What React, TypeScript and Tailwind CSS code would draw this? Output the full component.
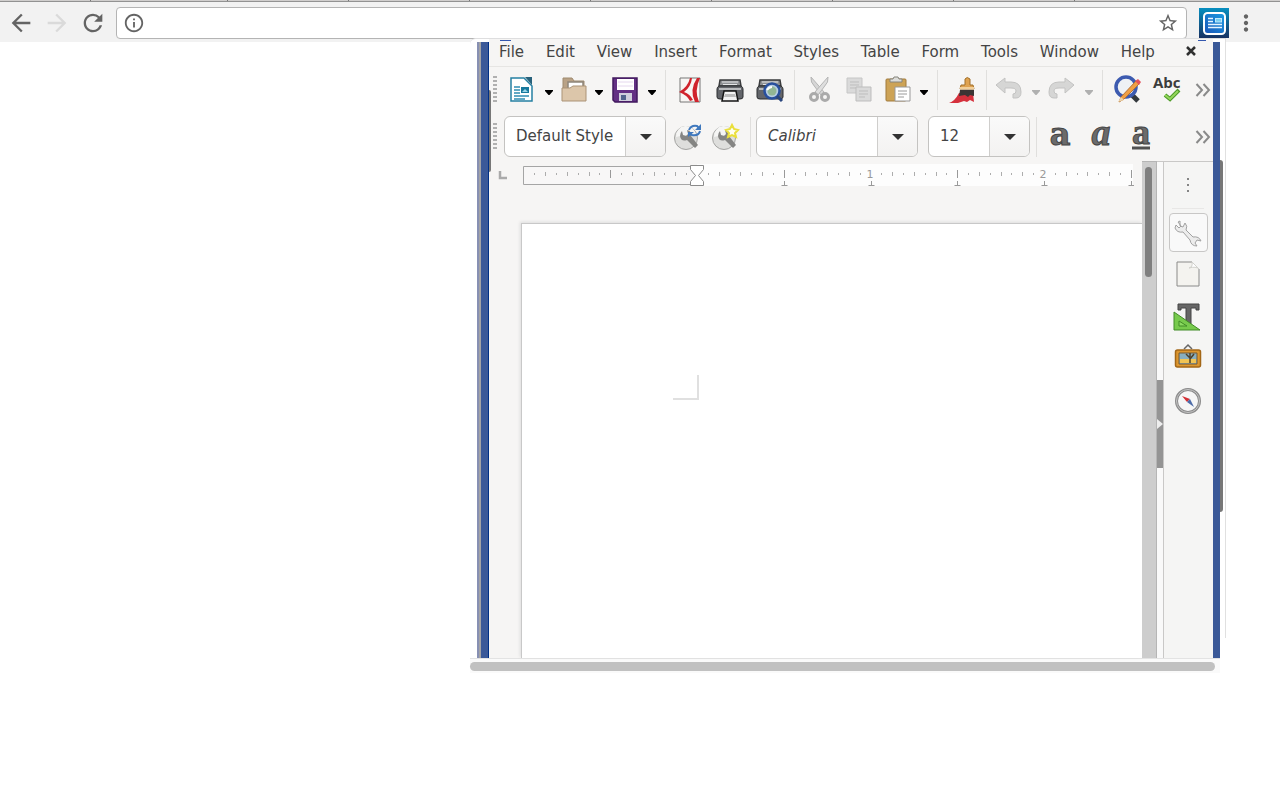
import type { ReactNode } from "react";
import {
  MdArrowBack,
  MdArrowForward,
  MdInfoOutline,
  MdMoreVert,
  MdRefresh,
  MdStarBorder,
} from "react-icons/md";

const menus = [
  "File",
  "Edit",
  "View",
  "Insert",
  "Format",
  "Styles",
  "Table",
  "Form",
  "Tools",
  "Window",
  "Help",
];

const Icon = ({ children }: { children: ReactNode }) => (
  <svg
    viewBox="0 0 28 28"
    className="h-7 w-7 shrink-0 overflow-visible"
    fill="none"
    aria-hidden="true"
  >
    {children}
  </svg>
);

const Tool = ({
  label,
  className = "",
  children,
}: {
  label: string;
  className?: string;
  children: ReactNode;
}) => (
  <button
    type="button"
    aria-label={label}
    className={`h-7 w-7 shrink-0 ${className}`}
  >
    <Icon>{children}</Icon>
  </button>
);

const Caret = ({
  label,
  muted,
  className = "",
}: {
  label: string;
  muted?: boolean;
  className?: string;
}) => (
  <button
    type="button"
    aria-label={label}
    className={`flex h-7 w-3.5 shrink-0 items-center justify-center ${className}`}
  >
    <svg viewBox="0 0 8 5" className="mt-1 h-[5px] w-2" aria-hidden="true">
      <path d="M0 0h8v1L4.500 5h-1L0 1z" fill={muted ? "#b0b0b0" : "#000"} />
    </svg>
  </button>
);

const Separator = ({ className = "" }: { className?: string }) => (
  <div className={`h-10 w-px shrink-0 bg-[#e0dfdd] ${className}`} />
);

const Handle = () => (
  <div className="flex w-3 shrink-0 justify-center">
    <div className="h-7 w-1 bg-[repeating-linear-gradient(#b0b0b0_0_2px,transparent_2px_4px)]" />
  </div>
);

const More = () => (
  <button type="button" aria-label="More" className="mr-0.5 ml-auto shrink-0">
    <svg
      viewBox="0 0 16 14"
      className="h-3.5 w-4"
      fill="none"
      stroke="#8a8a8a"
      strokeWidth="2"
      aria-hidden="true"
    >
      <path d="M1.500 1l5.500 6-5.500 6M8.500 1l5.500 6-5.500 6" />
    </svg>
  </button>
);

const Combo = ({
  label,
  value,
  className,
  inputClass = "",
}: {
  label: string;
  value: string;
  className: string;
  inputClass?: string;
}) => (
  <div
    className={`flex h-[41px] shrink-0 overflow-hidden rounded-md border border-[#c4c3c1] bg-white ${className}`}
  >
    <input
      aria-label={label}
      defaultValue={value}
      className={`mr-3 mb-px ml-[11px] min-w-0 flex-1 bg-transparent text-[15px] text-[#444] outline-none ${inputClass}`}
    />
    <button
      type="button"
      aria-label={`Open ${label}`}
      className="flex w-10 items-center justify-center border-l border-[#cfcecc] bg-linear-to-b from-[#fafafa] to-[#f3f2f1]"
    >
      <svg viewBox="0 0 12 6" className="h-1.5 w-3" aria-hidden="true">
        <path d="M0 0h12L6 6z" fill="#333" />
      </svg>
    </button>
  </div>
);

const Printer = () => (
  <>
    <path d="M4 4h20l1 6H3z" fill="#8f9194" stroke="#3a3b3d" strokeWidth="1.500" />
    <path d="M6 6h16M7 8.500h14" stroke="#e4e5e6" />
    <path
      d="M3 10h22q2 1 2 3v8q0 2-3 2H4q-3 0-3-2v-8q0-2 2-3z"
      fill="#63656a"
      stroke="#2d2e30"
    />
    <path d="M3 13h22" stroke="#b9bbbd" strokeWidth="2" />
  </>
);

const StyleBase = () => (
  <>
    <circle cx="12" cy="15" r="11.500" fill="#dededc" stroke="#a4a4a2" />
    <path d="M2 14a10 10 0 0 1 20-2Q12 11 2 14z" fill="#f5f5f4" />
    <path
      d="M8 8l1 4 3 1 2-2-1-4q5 1 4 6l7 9-3 3-8-8q-6 2-7-4 0-3 2-5z"
      fill="#858583"
    />
  </>
);

const BrowserBar = () => (
  <header className="bg-[#f2f2f2]">
    <div className="flex h-[2px] border-b border-[#929292] bg-[#d0cecd]">
      <div className="w-[91px] border-r border-[#777]" />
      <div className="w-[137px] border-r border-[#777]" />
      {[0, 1, 2, 3, 4, 5, 6].map((tab) => (
        <div key={tab} className="w-[121px] border-r border-[#777]" />
      ))}
    </div>
    <div className="flex h-10 items-center gap-2 pt-px pr-[21px] pl-[7px] text-[#646464]">
      <button type="button" aria-label="Back">
        <MdArrowBack size={28} />
      </button>
      <button type="button" aria-label="Forward" className="text-[#dadada]">
        <MdArrowForward size={28} />
      </button>
      <button type="button" aria-label="Reload">
        <MdRefresh size={28} />
      </button>
      <div className="ml-px flex h-8 flex-1 items-center rounded border border-[#b4b4b4] bg-white px-1.5">
        <MdInfoOutline size={22} />
        <input
          aria-label="Address"
          className="mx-2 min-w-0 flex-1 bg-transparent text-sm outline-none"
        />
        <button type="button" aria-label="Bookmark" className="mr-px">
          <MdStarBorder size={22} />
        </button>
      </div>
      <button type="button" aria-label="Writer extension" className="ml-1">
        <svg viewBox="0 0 30 30" className="h-[30px] w-[30px]" aria-hidden="true">
          <defs>
            <linearGradient id="extBack" x1="0" y1="0" x2="0" y2="1">
              <stop offset="0" stopColor="#078fc0" />
              <stop offset="1" stopColor="#173263" />
            </linearGradient>
            <linearGradient id="extFront" x1="0" y1="1" x2="1" y2="0">
              <stop offset="0" stopColor="#1b55b8" />
              <stop offset="1" stopColor="#199ce2" />
            </linearGradient>
          </defs>
          <path d="M0 0h30v30H0z" fill="url(#extBack)" />
          <rect x="5" y="5" width="21" height="21" rx="3.500" fill="url(#extFront)" stroke="#fff" strokeWidth="2" />
          <path d="M9 10.500h5M9 13.500h5M9 16.500h14M9 19.500h14" stroke="#e6f4ff" strokeWidth="1.500" />
          <rect x="16.500" y="10.500" width="6" height="3.500" fill="#7ad0f2" stroke="#bfe9fb" />
        </svg>
      </button>
      <button type="button" aria-label="Browser menu" className="-ml-1">
        <MdMoreVert size={26} />
      </button>
    </div>
  </header>
);

const MenuBar = () => (
  <nav className="flex h-7 shrink-0 items-center border-b border-[#e6e5e3] pr-4 pl-2.5">
    <div className="mb-0.5 flex flex-1 justify-between text-[15px] leading-5 text-[#444]">
      {menus.map((menu) => (
        <button key={menu} type="button">
          {menu}
        </button>
      ))}
    </div>
    <button type="button" aria-label="Close document" className="mb-1 ml-[30px]">
      <svg viewBox="0 0 12 12" className="h-3 w-3" aria-hidden="true">
        <path d="M2 2l8 8M10 2l-8 8" stroke="#303030" strokeWidth="2.500" />
      </svg>
    </button>
  </nav>
);

const StandardToolbar = () => (
  <div className="flex h-[46px] shrink-0 items-center">
    <Handle />
    <Tool label="New" className="ml-1.5">
      <path d="M4 2h13l8 8v15H4z" fill="#fff" stroke="#2680a2" strokeWidth="1.500" />
      <path d="M18 1h7v8z" fill="#28617b" />
      <path d="M7 11h6M7 14h6M7 17h6M7 20h15M7 23h11" stroke="#2f8db2" strokeWidth="1.500" />
      <path d="M14 11h8v6h-8z" fill="#17799d" />
      <path d="M15 16l3-3 3 3" fill="#9cd5e8" />
    </Tool>
    <Caret label="New options" className="ml-[7px]" />
    <Tool label="Open" className="ml-1">
      <path d="M3 21V2h9l2 3h10v16z" fill="#b9a286" stroke="#a08a6e" />
      <path d="M8 6h15v9H8z" fill="#fff" stroke="#8f867b" strokeWidth="1.500" />
      <path d="M2 12h8l3-2h13v15H2z" fill="#dcc6aa" stroke="#ab9377" />
    </Tool>
    <Caret label="Open options" className="ml-1" />
    <Tool label="Save" className="ml-[5px]">
      <path d="M2 2h24v24H4l-2-2z" fill="#633084" stroke="#42195e" strokeWidth="1.500" />
      <path d="M6 3h17v11H6z" fill="#fff" />
      <path d="M7 6h15M7 10h15" stroke="#e5d8ee" />
      <path d="M8 17h13v8H8z" fill="#d0d0dc" />
      <path d="M10 19h5v5h-5z" fill="#52648c" />
    </Tool>
    <Caret label="Save options" className="ml-1.5" />
    <Separator className="ml-1.5" />
    <Tool label="Export as PDF" className="ml-2.5">
      <path d="M4 2h20v24H4z" fill="#f8f6f4" stroke="#777" />
      <path d="M14 2Q12 11 3 16q8 3 11 9l3-1q-3-6-9-8 7-5 8-14z" fill="#d0232c" />
      <path d="M21 2q-8 12-2 24h4q-5-11 1-24z" fill="#d0232c" />
    </Tool>
    <Tool label="Print" className="ml-3">
      <Printer />
      <path d="M8 15h12l2 10H6z" fill="#f2f2f2" stroke="#151515" strokeWidth="1.500" />
      <path d="M9 18h10l1 3H8z" fill="#bcbcbc" />
    </Tool>
    <Tool label="Print preview" className="ml-3">
      <Printer />
      <circle cx="16" cy="15" r="7.500" fill="#b5cce0" stroke="#284f9d" strokeWidth="2.500" />
      <circle cx="16" cy="15" r="4.500" fill="#91b594" />
      <path d="M11 14q2-3 5-3" stroke="#fff" strokeWidth="2" />
      <path d="M21 20l5 5" stroke="#29457d" strokeWidth="3" />
    </Tool>
    <Separator className="ml-2.5" />
    <Tool label="Cut" className="ml-2.5">
      <path d="M6 1q-1 5 4 10l6 8 3-3-6-7z" fill="#d6d6d6" stroke="#b5b5b5" />
      <path d="M23 1q1 5-4 10l-6 8-3-3 6-7z" fill="#dedede" stroke="#b5b5b5" />
      <circle cx="9" cy="21" r="3.500" stroke="#aaa" strokeWidth="3" />
      <circle cx="20" cy="21" r="3.500" stroke="#aaa" strokeWidth="3" />
    </Tool>
    <Tool label="Copy" className="ml-3">
      <path d="M2 2h15v15H2z" fill="#dadada" stroke="#c6c6c6" />
      <path d="M5 6h9M5 9h9M5 12h6" stroke="#bdbdbd" />
      <path d="M11 11h15v14H11z" fill="#dadada" stroke="#bdbdbd" />
      <path d="M14 15h9M14 18h9M14 21h6" stroke="#bdbdbd" />
    </Tool>
    <Tool label="Paste" className="ml-3">
      <rect x="1" y="3" width="20" height="22" rx="1" fill="#cda356" stroke="#a17b3c" />
      <path d="M5 6V3h3l1-2h4l1 2h3v3z" fill="#dcdcd9" stroke="#85847d" />
      <path d="M10 11h15v14H10z" fill="#fff" stroke="#999" />
      <path d="M13 15h9M13 18h9M13 21h6" stroke="#9a9a9a" />
    </Tool>
    <Caret label="Paste options" className="ml-1" />
    <Separator className="ml-1.5" />
    <Tool label="Clone formatting" className="ml-2.5">
      <path d="M11 17h14l1 9-4-2-3 2-3-1-6 2H1q6-2 10-10z" fill="#d5303c" />
      <path d="M17 9V3q2-3 5 0v6h3l1 4H12l1-4z" fill="#dfa250" stroke="#a06f2a" />
      <path d="M12 12h14" stroke="#f1cf9a" strokeWidth="2" />
      <path d="M12 14h14v6l-4-1-2 2-3-2-6 1z" fill="#3c3434" />
    </Tool>
    <Separator className="ml-2.5" />
    <Tool label="Undo" className="ml-2">
      <path d="M10 2v4h6q10 0 10 10 0 6-5 6h-3v-4q3 0 3-3t-5-3h-6v5L1 9z" fill="#d6d6d5" stroke="#c3c3c2" />
    </Tool>
    <Caret label="Undo history" muted className="ml-1.5" />
    <Tool label="Redo" className="ml-1">
      <path d="M18 2v4h-6Q2 6 2 16q0 6 5 6h3v-4q-3 0-3-3t5-3h6v5l9-8z" fill="#d6d6d5" stroke="#c3c3c2" />
    </Tool>
    <Caret label="Redo history" muted className="ml-[7px]" />
    <Separator className="ml-1.5" />
    <Tool label="Find and replace" className="ml-2.5">
      <path d="M17 17l8 8" stroke="#33383c" strokeWidth="5" />
      <circle cx="13" cy="11" r="10" fill="#eef1f4" stroke="#3d5bb0" strokeWidth="3.500" />
      <path d="M6 26l2-5L23 5l3 3-15 15z" fill="#ef9f45" stroke="#b57134" />
      <path d="M22 5l3-2 3 3-2 3z" fill="#e2515c" />
      <path d="M5 26l3-5 3 3z" fill="#ecd3ab" />
    </Tool>
    <Tool label="Spelling" className="ml-3">
      <text x="0" y="12" className="fill-[#3c3c3c] font-['Open_Sans',sans-serif] text-[15px] font-bold">
        Abc
      </text>
      <path d="M12 19l5 4 9-9" stroke="#4d9a28" strokeWidth="4" />
      <path d="M12 19l5 4 8-8" stroke="#95d75c" strokeWidth="2" />
    </Tool>
    <More />
  </div>
);

const FormattingToolbar = () => (
  <div className="flex h-12 shrink-0 items-center pb-px">
    <Handle />
    <Combo label="Paragraph style" value="Default Style" className="ml-[3px] w-[162px]" />
    <Tool label="Update style" className="ml-2">
      <StyleBase />
      <path d="M15 7q2-5 8-4l2 2M26 8q-1 5-8 4l-2-1" stroke="#3f78bd" strokeWidth="2" />
      <path d="M27 1v6h-6zM14 14V9h6z" fill="#3f78bd" />
    </Tool>
    <Tool label="New style" className="ml-2.5">
      <StyleBase />
      <path d="M20 2l2 4 4 1-3 3 1 4-4-2-4 2 1-4-3-3 4-1z" fill="#fffef0" stroke="#eadf3c" strokeWidth="2" />
    </Tool>
    <Separator className="ml-2.5" />
    <Combo label="Font name" value="Calibri" className="ml-[5px] w-[162px]" inputClass="italic" />
    <Combo label="Font size" value="12" className="ml-2.5 w-[102px]" />
    <Separator className="ml-1.5" />
    <Tool label="Bold" className="ml-2.5">
      <text x="13" y="22" textAnchor="middle" className="fill-[#6b6b6b] stroke-[#444] font-['DejaVu_Serif',serif] text-[32px] font-bold">
        a
      </text>
    </Tool>
    <Tool label="Italic" className="ml-3">
      <text x="14" y="22" textAnchor="middle" className="fill-[#6b6b6b] stroke-[#444] font-['Liberation_Serif',serif] text-[38px] font-bold italic">
        a
      </text>
    </Tool>
    <Tool label="Underline" className="ml-3">
      <text x="14" y="21" textAnchor="middle" className="fill-[#6b6b6b] stroke-[#444] font-['Liberation_Serif',serif] text-[36px] font-bold">
        a
      </text>
      <path d="M5 25h18" stroke="#505050" strokeWidth="3" />
    </Tool>
    <More />
  </div>
);

const INCH = 173.5;
const ORIGIN = 175;

const Ruler = () => {
  const ticks = Array.from({ length: 56 }, (_, i) => i - 15);

  return (
    <div className="flex h-[26px] shrink-0">
      <button type="button" aria-label="Tab type" className="w-[33px] shrink-0 pl-[9px]">
        <svg viewBox="0 0 10 10" className="mt-0.5 h-2.5 w-2.5" aria-hidden="true">
          <path d="M2 1v7h7" fill="none" stroke="#aaa" strokeWidth="2.500" />
        </svg>
      </button>
      <div className="flex-1 overflow-hidden">
        <svg width="612" height="26" role="img" aria-label="Ruler" className="max-w-none">
          <path d={`M${ORIGIN} 3h436v22H${ORIGIN}z`} fill="#fdfdfd" />
          <path d="M1.500 5.500h174v18H1.500z" fill="#f8f7f7" stroke="#a5a5a5" />
          {ticks.map((tick) => {
            const x = Math.round(ORIGIN + (tick * INCH) / 16);
            if (tick === 0 || tick === 16 || tick === 32 || x > 609) return null;
            const half = tick % 8 === 0;
            const size = half ? 4 : tick % 2 === 0 ? 2 : 1;
            return (
              <path
                key={tick}
                d={`M${x + 0.5} ${13 - size}v${size * 2}`}
                stroke={half ? "#999" : "#adadad"}
              />
            );
          })}
          {[1, 2, 3, 4, 5, 6, 7].map((stop) => {
            const x = Math.round(ORIGIN + (stop * INCH) / 2);
            return (
              <path key={stop} d={`M${x + 0.5} 20v5m-3-.5h6`} stroke="#999" />
            );
          })}
          <g className="fill-[#999] text-[11px]" textAnchor="middle">
            <text x="348" y="17">
              1
            </text>
            <text x="521" y="17">
              2
            </text>
          </g>
          <path
            d="M168.500 4.500h13v4l-5 6 5 6v4h-13v-4l5-6-5-6z"
            fill="#fff"
            stroke="#8b8b8b"
          />
        </svg>
      </div>
    </div>
  );
};

const Sidebar = () => (
  <aside className="flex w-[50px] shrink-0 flex-col items-center border-t border-l border-[#c9c8c7] bg-[#f5f5f4] pr-px">
    <button type="button" aria-label="Sidebar settings" className="mt-2.5">
      <Icon>
        <path d="M13 6h2v2h-2zM13 12h2v2h-2zM13 18h2v2h-2z" fill="#858585" />
      </Icon>
    </button>
    <div className="mt-2 h-px w-8 bg-[#e8e7e6]" />
    <button
      type="button"
      aria-label="Properties"
      className="mt-1 flex h-[39px] w-[39px] items-center justify-center rounded border border-[#c8c7c6] bg-[#f9f9f9]"
    >
      <Icon>
        <path
          d="M6 2v5l3 1 2-4q3 3 1 7l7 7q6-1 8 4l-4-1-2 3 2 3q-6 0-7-6l-7-8q-6 1-8-4l1-3 3 3 2-2-3-4z"
          fill="#ececec"
          stroke="#a2a2a2"
        />
      </Icon>
    </button>
    <div className="mt-[7px] flex flex-col items-center gap-4">
      <Tool label="Page">
        <path d="M3 3h15l7 7v17H3z" fill="#f4f3ef" stroke="#8a8a89" />
        <path d="M18 3q1 5-3 6 7-2 10 1z" fill="#fff" stroke="#d1d1cc" />
      </Tool>
      <Tool label="Styles">
        <path d="M4 1h21v6h-3V5h-5v18h-5V5H7v2H4z" fill="#666" stroke="#444" />
        <path d="M0 9v18h26z" fill="#77ca4c" stroke="#418b26" />
        <path d="M5 18v5h8z" fill="#8bda61" stroke="#418b26" />
      </Tool>
    </div>
    <div className="mt-3 flex flex-col items-center gap-4">
      <Tool label="Gallery">
        <path d="M10 6l4-4 4 4" stroke="#666" strokeWidth="1.500" />
        <rect x="1.500" y="7" width="25" height="17" rx="2" fill="#dc962f" stroke="#a36717" strokeWidth="1.500" />
        <path d="M5 10h18v11H5z" fill="#88aebe" stroke="#745b34" />
        <path d="M6 16h16v4H6z" fill="#f0c455" />
        <path d="M16 20v-5l-4-4m4 5l4-5m-4 3v-4" stroke="#4e402a" strokeWidth="1.500" />
      </Tool>
      <Tool label="Navigator">
        <circle cx="14" cy="14" r="11.500" fill="#f6f6f6" stroke="#8b8b8b" strokeWidth="3" />
        <circle cx="14" cy="14" r="11.500" stroke="#c5c5c5" />
        <path d="M8 9l8 3-3 3z" fill="#d32f35" />
        <path d="M20 20l-7-5 3-3z" fill="#4d6ca9" />
      </Tool>
    </div>
  </aside>
);

const Workspace = () => (
  <div className="flex min-h-0 flex-1">
    <div className="flex min-w-0 flex-1 flex-col">
      <Ruler />
      <main
        aria-label="Document"
        className="mt-9 ml-8 flex-1 border-t border-l border-[#c8c8c8] bg-white pt-[151px] pl-[151px] shadow-[-1px_-1px_3px_#dddddd]"
      >
        <div className="h-[25px] w-[26px] border-r-2 border-b-2 border-[#e0e0e0]" />
      </main>
    </div>
    <div className="w-[15px] shrink-0 border-t border-r border-[#b5b5b5] bg-[#cdcdcd] pt-[5px] pl-[3px]">
      <div className="h-[110px] w-[7px] rounded-full bg-[#7f7f7f]" />
    </div>
    <div className="flex w-1.5 shrink-0 flex-col border-t border-[#c9c8c7] bg-[#f9f9f9]">
      <button
        type="button"
        aria-label="Hide sidebar"
        className="mt-[218px] flex h-[88px] items-center bg-[#949494]"
      >
        <svg viewBox="0 0 6 10" className="h-2.5 w-1.5" aria-hidden="true">
          <path d="M0 0l6 5-6 5z" fill="#eee" />
        </svg>
      </button>
    </div>
    <Sidebar />
  </div>
);

export default function App() {
  return (
    <div className="flex h-screen min-h-[700px] flex-col bg-white pb-[127px] font-['DejaVu_Sans',sans-serif]">
      <BrowserBar />
      <section
        aria-label="Writer"
        className="relative -mt-1 mr-[54px] ml-[470px] flex min-h-0 flex-1 flex-col rounded-tl-md border-t border-[#dededf] bg-white"
      >
        <div className="flex min-h-0 flex-1">
          <div className="mt-[3px] ml-[7px] flex w-3 shrink-0 border-r border-[#003087] bg-[#3b5998]">
            <div className="w-0.5 bg-[#8790b3]" />
            <div className="w-0.5 bg-[#a3a3a5]" />
          </div>
          <div className="relative flex min-w-0 flex-1 flex-col bg-[#f6f5f4]">
            <div className="absolute top-px left-[11px] h-px w-[11px] bg-[#3457ae]" />
            <div className="absolute top-px right-[7px] h-px w-2 bg-[#3457ae]" />
            <div className="absolute top-[51px] left-0 h-[82px] w-0.5 rounded-r bg-[#777]" />
            <MenuBar />
            <StandardToolbar />
            <FormattingToolbar />
            <Workspace />
          </div>
          <div className="mt-[3px] w-[7px] shrink-0 bg-[#3b5998]" />
          <div className="mb-5 w-1.5 shrink-0 border-r border-[#e0e0e0] pt-[121px]">
            <div className="h-[352px] w-[3px] rounded-r bg-[#777]" />
          </div>
        </div>
        <div className="mr-1.5 h-[15px] shrink-0 border-t border-[#e3e3e3] bg-[#fafafa] pt-[3px] pr-[5px]">
          <div className="h-[9px] rounded-full bg-[#c1c1c1]" />
        </div>
      </section>
    </div>
  );
}
